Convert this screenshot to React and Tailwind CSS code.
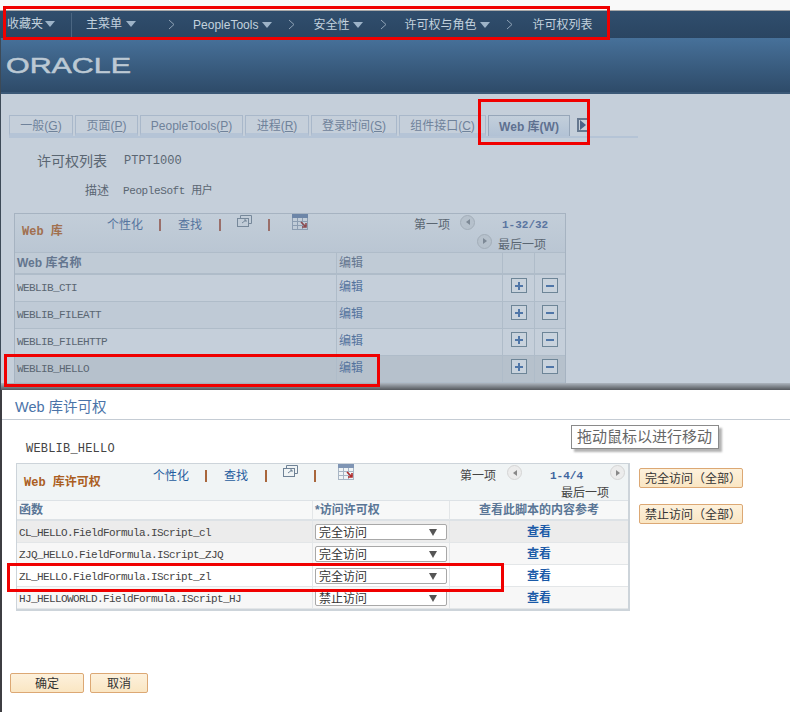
const sans = "[font-family:'Liberation_Sans','Noto_Sans_CJK_SC',sans-serif]";
const mono = "[font-family:'Liberation_Mono','Noto_Sans_CJK_SC',monospace]";

function Tri({ className = "" }) {
  return <span className={"inline-block w-0 h-0 border-x-[5px] border-x-transparent border-t-[6px] border-t-[#9db3c8] ml-1 " + className} />;
}

function Chevron({ className = "" }) {
  return (
    <svg width="7" height="11" viewBox="0 0 7 11" className={className}>
      <path d="M1 1l5 4.5L1 10" fill="none" stroke="#8fa3b7" strokeWidth="1" />
    </svg>
  );
}

function NewWindowIcon({ color }) {
  return (
    <svg width="15" height="12" viewBox="0 0 15 12">
      <path d="M3.5 3V.5h11v8H12" fill="none" stroke={color} />
      <rect x="0.5" y="3.5" width="11" height="8" fill="none" stroke={color} />
      <path d="M5 8l4-3M7 5h2v2" fill="none" stroke={color} />
    </svg>
  );
}

function GridIcon({ line, head, arrow }) {
  return (
    <svg width="16" height="16" viewBox="0 0 16 16">
      <rect x="0.5" y="0.5" width="15" height="15" fill="none" stroke={line} />
      <rect x="0" y="0" width="16" height="4" fill={head} />
      <path d="M5.5 4v12M10.5 4v12M0 7.5h16M0 11.5h16" stroke={line} />
      <path d="M9 8l5 5M14 9v4h-4" fill="none" stroke={arrow} strokeWidth="1.6" />
    </svg>
  );
}

function PageBtn({ dir, dim }) {
  return (
    <span className={"flex w-[15px] h-[15px] -mt-[6px] items-center justify-center rounded-full border " + (dim ? "border-[#a3aeb9] bg-[#b6c1cc]" : "border-[#d5d5d5] bg-[#ececec]")}>
      <span className={"w-0 h-0 border-y-[3px] border-y-transparent " + (dir === "l" ? "border-r-[4px] " : "border-l-[4px] ") + (dim ? "border-l-[#7d8996] border-r-[#7d8996]" : "border-l-[#888888] border-r-[#888888]")} />
    </span>
  );
}

function SquareBtn({ children }) {
  return (
    <span className="flex w-4 h-[15px] items-center justify-center border border-[#6d8597] bg-[#c9d3dd]">
      <svg width="8" height="8" viewBox="0 0 8 8">
        <path d={children === "+" ? "M0 4h8M4 0v8" : "M0 4h8"} stroke="#4f76a8" strokeWidth="2" />
      </svg>
    </span>
  );
}

function Nav() {
  return (
    <div className="h-[27px] flex items-center text-[12px] leading-none text-[#c3d2de] bg-gradient-to-b from-[#304e6d] to-[#2a4562]">
      <span className="ml-[7px] flex items-center -mt-[2px]">收藏夹<Tri className="ml-[2px]" /></span>
      <span className="ml-[16px] w-px h-[24px] bg-[#4b6682]" />
      <span className="ml-[14px] flex items-center -mt-[2px]">主菜单<Tri /></span>
      <Chevron className="ml-[32px]" />
      <span className="ml-[18px] flex items-center">PeopleTools<Tri /></span>
      <Chevron className="ml-[16px]" />
      <span className="ml-[18px] flex items-center">安全性<Tri /></span>
      <Chevron className="ml-[17px]" />
      <span className="ml-[17px] flex items-center">许可权与角色<Tri /></span>
      <Chevron className="ml-[16px]" />
      <span className="ml-[19px]">许可权列表</span>
    </div>
  );
}

function Tab({ w, children, active }) {
  return (
    <div className={w + " h-[21px] flex items-center justify-center border border-b-0 text-[12px] pt-[2px] " + (active ? "border-[#96a6b9] font-bold text-[#5f7190] bg-gradient-to-b from-[#c3cfdb] to-[#b2c2d5]" : "border-[#a9b8ca] border-b-[3px] border-b-[#b5c4d6] text-[#6f829a]")}>
      <span>{children}</span>
    </div>
  );
}

const libs = ["WEBLIB_CTI", "WEBLIB_FILEATT", "WEBLIB_FILEHTTP", "WEBLIB_HELLO", ""];

function LibRow({ name, idx }) {
  const bg = idx === 3 ? "bg-[#b6c1cc]" : idx % 2 === 0 ? "bg-[#c5cfda]" : "bg-[#bfcad6]";
  return (
    <div className={bg + " grid grid-cols-[321px_166px_32px_31px] h-[27px] border-b border-[#afbcc9] text-[#5a6672]"}>
      <div className={mono + " px-[2px] pt-[5px] text-[11px] leading-4 tracking-[-0.6px]"}>{name}</div>
      <div className="border-l border-[#afbcc9] pl-[2px] pt-[4px] text-[12px] leading-4 text-[#55749e]">{name && "编辑"}</div>
      <div className="border-l border-[#afbcc9] flex justify-center pt-[3px]"><SquareBtn>+</SquareBtn></div>
      <div className="border-l border-[#afbcc9] flex justify-center pt-[3px]"><SquareBtn>-</SquareBtn></div>
    </div>
  );
}

function LibGrid() {
  return (
    <div className="ml-[14px] mt-[12px] w-[552px] border border-[#a6b3c1]">
      <div className="h-[38px] flex bg-gradient-to-b from-[#c3ced9] to-[#bac6d3]">
        <div className={mono + " ml-[7px] mt-[10px] w-[85px] text-[12px] leading-4 font-bold text-[#a1704f]"}>Web 库</div>
        <div className="flex items-center h-[22px] text-[12px] text-[#55749e]">
          <span className="w-[52px]">个性化</span>
          <span className="w-[19px]"><span className="block w-[2px] h-[12px] bg-[#9a6f6a]" /></span>
          <span className="w-[41px]">查找</span>
          <span className="w-[18px]"><span className="block w-[2px] h-[12px] bg-[#9a6f6a]" /></span>
          <span className="w-[31px] -mt-[8px]"><NewWindowIcon color="#76889a" /></span>
          <span className="w-[24px]"><span className="block w-[2px] h-[12px] bg-[#9a6f6a]" /></span>
          <span className="-mt-[7px]"><GridIcon line="#8c9db1" head="#6d86a8" arrow="#8c4a4f" /></span>
        </div>
        <div className="ml-[106px] w-[151px] text-[12px] leading-4 text-[#5a6672] whitespace-nowrap">
          <div className="flex items-center h-[22px]">
            <span>第一项</span>
            <span className="ml-[10px]"><PageBtn dir="l" dim /></span>
            <span className={mono + " ml-[27px] font-bold text-[#5a75a0] text-[11px]"}>1-32/32</span>
          </div>
          <div className="flex items-center h-[16px] pl-[63px] mt-[1px]">
            <span className="-mt-[2px]"><PageBtn dir="r" dim /></span>
            <span className="ml-[6px]">最后一项</span>
          </div>
        </div>
      </div>
      <div className="grid grid-cols-[321px_166px_32px_31px] h-[23px] border-y border-y-[#afbcc9] border-b-2 bg-[#c0cbd6] text-[12px] font-bold text-[#64768f]">
        <div className="pl-[2px] leading-[21px]">Web 库名称</div>
        <div className="border-l border-[#afbcc9] pl-[2px] leading-[21px] font-normal">编辑</div>
        <div className="border-l border-[#afbcc9]" />
        <div className="border-l border-[#afbcc9]" />
      </div>
      {libs.map((n, i) => <LibRow key={i} name={n} idx={i} />)}
    </div>
  );
}

function Select({ value }) {
  return (
    <div className="w-[132px] h-[16px] flex items-center justify-between border border-[#a8a8a8] rounded-[2px] bg-white pl-[3px] pr-[9px] text-[12px] leading-none text-[#333333] overflow-hidden">
      <span className="pt-[2px]">{value}</span>
      <span className="w-0 h-0 border-x-[4px] border-x-transparent border-t-[7px] border-t-[#555555]" />
    </div>
  );
}

const perms = [
  ["CL_HELLO.FieldFormula.IScript_cl", "完全访问", "bg-[#ececec]"],
  ["ZJQ_HELLO.FieldFormula.IScript_ZJQ", "完全访问", "bg-[#f7f7f7]"],
  ["ZL_HELLO.FieldFormula.IScript_zl", "完全访问", "bg-white"],
  ["HJ_HELLOWORLD.FieldFormula.IScript_HJ", "禁止访问", "bg-[#f7f7f7]"],
];

function PermGrid() {
  return (
    <div className="w-[614px] shrink-0 border-2 border-[#cdd4da] border-t border-l">
      <div className="h-[36px] flex bg-[#f0f4f5]">
        <div className={mono + " ml-[7px] mt-[11px] w-[131px] text-[12px] leading-4 font-bold text-[#ab5e22]"}>Web 库许可权</div>
        <div className="flex items-center h-[24px] text-[12px] text-[#1f5c9e]">
          <span className="w-[52px]">个性化</span>
          <span className="w-[19px]"><span className="block w-[2px] h-[12px] bg-[#a9663c]" /></span>
          <span className="w-[41px]">查找</span>
          <span className="w-[18px]"><span className="block w-[2px] h-[12px] bg-[#a9663c]" /></span>
          <span className="w-[31px] -mt-[10px]"><NewWindowIcon color="#6f8296" /></span>
          <span className="w-[24px]"><span className="block w-[2px] h-[12px] bg-[#a9663c]" /></span>
          <span className="-mt-[9px]"><GridIcon line="#a8b5c4" head="#7f95b4" arrow="#b02b2b" /></span>
        </div>
        <div className="ml-[106px] w-[168px] shrink-0 text-[12px] leading-4 text-[#444444] whitespace-nowrap">
          <div className="flex items-center h-[23px]">
            <span>第一项</span>
            <span className="ml-[11px]"><PageBtn dir="l" /></span>
            <span className={mono + " ml-[28px] font-bold text-[#3e649e] text-[11px]"}>1-4/4</span>
            <span className="ml-[27px]"><PageBtn dir="r" /></span>
          </div>
          <div className="h-[13px] pl-[101px] leading-[13px]">最后一项</div>
        </div>
      </div>
      <div className="grid grid-cols-[295px_137px_179px] h-[21px] border-y border-[#dde2e6] border-b-2 bg-[#f7f8f8] text-[12px] font-bold text-[#5a7696]">
        <div className="pl-[2px] leading-[19px]">函数</div>
        <div className="border-l border-[#e3e6e8] pl-[2px] leading-[19px]">*访问许可权</div>
        <div className="border-l border-[#e3e6e8] text-center leading-[19px]">查看此脚本的内容参考</div>
      </div>
      {perms.map(([fn, val, bg]) => (
        <div key={fn} className={bg + " grid grid-cols-[295px_137px_179px] h-[22px] border-b border-[#e3e6e8]"}>
          <div className={mono + " pl-[2px] pt-[4px] text-[11px] leading-4 tracking-[-0.6px] text-[#444444]"}>{fn}</div>
          <div className="border-l border-[#e3e6e8] pl-[2px] pt-[3px]"><Select value={val} /></div>
          <div className="border-l border-[#e3e6e8] text-center pt-[3px] text-[12px] leading-4 font-bold text-[#1a5aa8]">查看</div>
        </div>
      ))}
    </div>
  );
}

function OrangeBtn({ w, children, className = "" }) {
  return (
    <button className={w + " h-5 rounded-[2px] border border-[#dca874] bg-gradient-to-b from-[#fdf1dc] to-[#fae6c3] pt-[2px] text-[12px] leading-none text-[#333333] " + className}>
      {children}
    </button>
  );
}

function Redbox({ className }) {
  return <div className={"absolute border-[3px] border-[#f00000] pointer-events-none z-10 " + className} />;
}

export default function App() {
  return (
    <div className={sans + " relative w-[790px] h-[712px] overflow-hidden bg-white"}>
      {/* top panel behind the dialog */}
      <div className="h-[390px] overflow-hidden bg-[#c5cfda] relative">
        <div className="h-[11px] bg-[#f9f9f9] border-b border-[#a9a9a9]" />
        <Nav />
        <div className="h-[56px] bg-gradient-to-b from-[#47719a] to-[#2e4b69] border-b-2 border-[#3b5977] flex items-center pl-[5px]">
          <svg width="130" height="26" viewBox="0 0 130 26">
            <text x="1" y="21" textLength="125" lengthAdjust="spacingAndGlyphs" fontFamily="Liberation Sans" fontSize="22" stroke="#bcc9d4" strokeWidth="0.5" fill="#bcc9d4">ORACLE</text>
          </svg>
        </div>
        <div className="mt-[21px] ml-[9px] w-[629px] flex items-end gap-[2px] border-b-[2px] border-[#b5c4d6] h-[23px]">
          <Tab w="w-[64px]">一般(<u>G</u>)</Tab>
          <Tab w="w-[63px]">页面(<u>P</u>)</Tab>
          <Tab w="w-[103px]">PeopleTools(<u>P</u>)</Tab>
          <Tab w="w-[64px]">进程(<u>R</u>)</Tab>
          <Tab w="w-[86px]">登录时间(<u>S</u>)</Tab>
          <Tab w="w-[87px]">组件接口(<u>C</u>)</Tab>
          <Tab w="w-[82px]" active>Web 库(W)</Tab>
          <div className="ml-[5px] mb-[4px] w-[12px] h-[14px] border-2 border-[#66788f] flex items-center justify-center">
            <span className="w-0 h-0 border-y-[5px] border-y-transparent border-l-[6px] border-l-[#4d6389]" />
          </div>
        </div>
        <div className="mt-[13px] ml-[37px] flex items-center h-[20px] text-[#5a6672]">
          <span className="text-[14px] w-[87px]">许可权列表</span>
          <span className={mono + " text-[12px]"}>PTPT1000</span>
        </div>
        <div className="mt-[10px] ml-[85px] flex items-center h-[20px] text-[#5a6672]">
          <span className="text-[12px] w-[38px]">描述</span>
          <span className={mono + " text-[11px] tracking-[-0.4px]"}>PeopleSoft 用户</span>
        </div>
        <LibGrid />
        <div className="absolute left-0 right-0 bottom-0 h-[7px] bg-gradient-to-b from-[#aeb6bf] to-[#55595e]" />
        <div className="absolute left-0 top-[38px] bottom-0 w-px bg-[#3d4a57]" />
      </div>

      {/* dialog */}
      <div className="h-[322px] border-l-2 border-[#3d3d42]">
        <div className="h-[30px] border-b border-[#c5ccd4] pl-[13px] pt-[7px] text-[14.5px] leading-5 text-[#4a73a8]">Web 库许可权</div>
        <div className={mono + " ml-[24px] mt-[22px] h-[14px] text-[12px] leading-[14px] tracking-[0.2px] text-[#444444]"}>WEBLIB_HELLO</div>
        <div className="ml-[14px] mt-[7px] flex">
          <PermGrid />
          <div className="ml-[9px] mt-[5px] flex flex-col gap-4">
            <OrangeBtn w="w-[104px]" className="pl-1">完全访问（全部）</OrangeBtn>
            <OrangeBtn w="w-[104px]" className="pl-1">禁止访问（全部）</OrangeBtn>
          </div>
        </div>
        <div className="ml-[8px] mt-[62px] flex gap-[6px]">
          <OrangeBtn w="w-[74px]">确定</OrangeBtn>
          <OrangeBtn w="w-[58px]">取消</OrangeBtn>
        </div>
      </div>

      {/* tooltip and annotation boxes lie over the page */}
      <div className="absolute left-[571px] top-[425px] w-[148px] h-[24px] border border-[#8a8a8a] bg-white shadow-[3px_3px_2px_rgba(0,0,0,0.3)] pl-[5px] text-[15px] leading-[22px] text-[#666666] whitespace-nowrap">拖动鼠标以进行移动</div>
      <Redbox className="left-[3px] top-[6px] w-[607px] h-[34px]" />
      <Redbox className="left-[478px] top-[99px] w-[112px] h-[46px]" />
      <Redbox className="left-[4px] top-[354px] w-[376px] h-[33px]" />
      <Redbox className="left-[7px] top-[563px] w-[497px] h-[29px]" />
    </div>
  );
}
